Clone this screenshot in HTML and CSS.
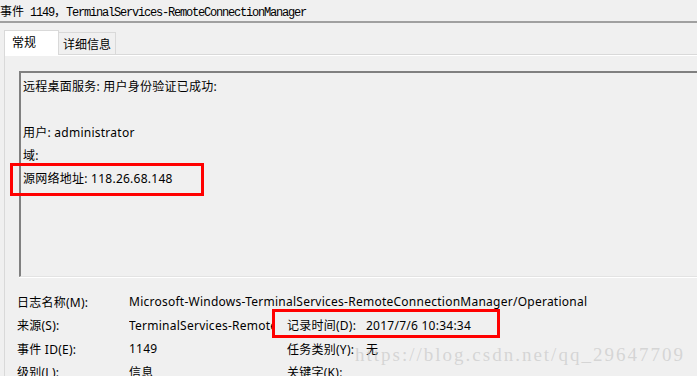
FILE: index.html
```html
<!DOCTYPE html>
<html lang="zh-CN">
<head>
  <meta charset="UTF-8">
  <meta name="viewport" content="width=device-width, initial-scale=1.0">
  <title>事件 1149</title>
  <link rel="stylesheet" href="styles.css">
</head>
<body>
  <div class="title"><span class="cjk">事件</span> 1149<span class="cjk">，</span>TerminalServices-RemoteConnectionManager</div>
  <div class="title-rule"></div>

  <div class="tabs">
    <div class="tab active">常规</div>
    <div class="tab">详细信息</div>
  </div>

  <div class="panel">
    <div class="desc">
      <p>远程桌面服务: 用户身份验证已成功:</p>
      <p>&nbsp;</p>
      <p>用户: administrator</p>
      <p>域:</p>
      <p>源网络地址: 118.26.68.148</p>
    </div>

    <div class="props">
      <span>日志名称(M):</span>
      <span class="wide">Microsoft-Windows-TerminalServices-RemoteConnectionManager/Operational</span>

      <span>来源(S):</span>
      <span class="clip">TerminalServices-RemoteConnectionManager</span>
      <span>记录时间(D):</span>
      <span>2017/7/6 10:34:34</span>

      <span>事件 ID(E):</span>
      <span>1149</span>
      <span>任务类别(Y):</span>
      <span>无</span>

      <span>级别(L):</span>
      <span>信息</span>
      <span>关键字(K):</span>
      <span></span>
    </div>
  </div>

  <!-- 截图上的标注 -->
  <div class="mark mark-ip"></div>
  <div class="mark mark-time"></div>
  <div class="watermark">https://blog.csdn.net/qq_29647709</div>
</body>
</html>
```

FILE: styles.css
```css
html, body {
  margin: 0;
  padding: 0;
  height: 100%;
  overflow: hidden;
}

body {
  position: relative;
  background-color: #f0f0f0;
  color: #000;
  font-family: "Noto Sans", "Noto Sans CJK SC", sans-serif;
  font-size: 12px;
  letter-spacing: 0.25px;
}

.title {
  height: 21px;
  line-height: 21px;
  font-family: "Liberation Mono", monospace;
  letter-spacing: -1.2px;
  white-space: nowrap;
}

.title .cjk {
  font-family: "Noto Sans CJK SC", sans-serif;
  letter-spacing: 0;
}

.title-rule {
  height: 2px;
  background-color: #a0a0a0;
}

.tabs {
  display: flex;
  align-items: flex-end;
  height: 31px;
  padding-left: 4px;
}

.tab {
  height: 21px;
  line-height: 21px;
  padding: 0 4px;
  border: 1px solid #d9d9d9;
  border-bottom: none;
  font-family: "Noto Sans CJK SC", sans-serif;
  letter-spacing: 0;
}

.tab.active {
  height: 24px;
  line-height: 22px;
  width: 42px;
  padding-left: 7px;
  background-color: #fff;
  margin-bottom: -1px;
  position: relative;
}

.tab + .tab {
  border-left: none;
}

.panel {
  margin-left: 4px;
  border-top: 1px solid #d9d9d9;
  border-left: 1px solid #d9d9d9;
  box-shadow: inset 0 1px 0 #fff;
  padding: 16px 0 0 14px;
}

.desc {
  height: 201px;
  padding: 2px 0 0 2px;
  border-top: 2px solid #808080;
  border-left: 2px solid #808080;
  border-bottom: 1px solid #e3e3e3;
  box-shadow: 0 1px 0 #fff;
}

.desc p {
  margin: 0;
  line-height: 23px;
  white-space: nowrap;
}

.props {
  display: grid;
  grid-template-columns: 112px 158px 79px 1fr;
  grid-auto-rows: 23.5px;
  align-items: center;
  margin: 13px 0 0 -2px;
  white-space: nowrap;
}

.props .wide {
  grid-column: 2 / 5;
}

.props .clip {
  overflow: hidden;
  margin-right: 12px;
}

.mark {
  position: absolute;
  border: 3px solid #ff0000;
}

.mark-ip {
  left: 10px;
  top: 163px;
  width: 188px;
  height: 27px;
}

.mark-time {
  left: 272px;
  top: 309px;
  width: 222px;
  height: 23px;
}

.watermark {
  position: absolute;
  left: 355px;
  top: 344px;
  font-family: "Liberation Serif", serif;
  font-size: 19px;
  letter-spacing: 2px;
  color: rgba(190, 190, 190, 0.55);
  white-space: nowrap;
}
```
